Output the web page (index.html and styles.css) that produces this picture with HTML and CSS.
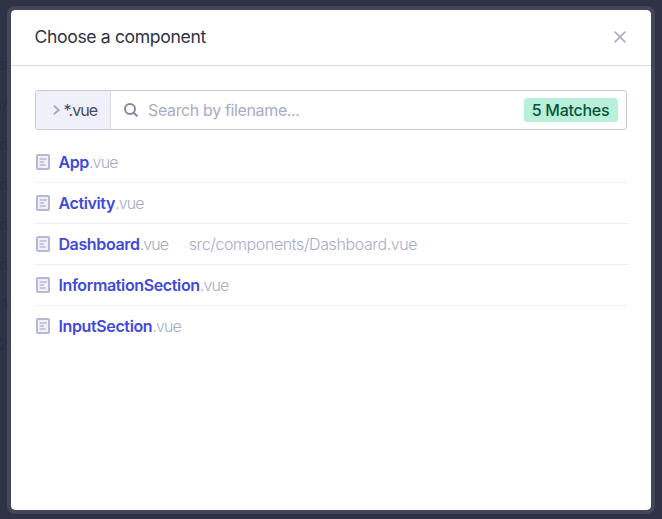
FILE: index.html
```html
<!DOCTYPE html>
<html lang="en">
<head>
<meta charset="utf-8">
<title>Choose a component</title>
<link rel="stylesheet" href="styles.css">
</head>
<body>
<svg class="sprite" aria-hidden="true">
  <symbol id="file" viewBox="0 0 14 16">
    <rect x="1" y="1" width="12" height="14" rx=".8" fill="#f0f0fa" stroke="#b8b8d4" stroke-width="2"/>
    <path d="M3.7 5h7M3.7 8h4.3M3.7 11h6" fill="none" stroke="#b8b8d4" stroke-width="1.5"/>
  </symbol>
</svg>
<div class="backdrop" aria-hidden="true"><span>ts</span><span>s/</span><span>d</span><span>d</span><span>id</span><span>id</span><span>1</span><span>2</span></div>
<main class="modal">
  <header class="header">
    <h1 class="title">Choose a component</h1>
    <svg class="close" viewBox="0 0 12 12"><path d="M.6.6l10.8 10.8M11.4.6L.6 11.4"/></svg>
  </header>
  <section class="content">
    <div class="search">
      <div class="filter">
        <svg class="chevron" viewBox="0 0 7 10"><path d="M.8.7l5 4.3-5 4.3"/></svg>
        <span class="glob">*.vue</span>
      </div>
      <svg class="magnifier" viewBox="0 0 14 14"><circle cx="6" cy="6" r="5"/><path d="M9.6 9.6l3.8 3.8"/></svg>
      <span class="placeholder">Search by filename...</span>
      <span class="badge">5 Matches</span>
    </div>
    <ul class="files">
      <li class="file"><svg class="icon"><use href="#file"/></svg><span class="name">App</span><span class="ext">.vue</span></li>
      <li class="file"><svg class="icon"><use href="#file"/></svg><span class="name">Activity</span><span class="ext">.vue</span></li>
      <li class="file"><svg class="icon"><use href="#file"/></svg><span class="name">Dashboard</span><span class="ext">.vue</span><span class="path">src/components/Dashboard.vue</span></li>
      <li class="file"><svg class="icon"><use href="#file"/></svg><span class="name">InformationSection</span><span class="ext">.vue</span></li>
      <li class="file"><svg class="icon"><use href="#file"/></svg><span class="name">InputSection</span><span class="ext">.vue</span></li>
    </ul>
  </section>
</main>
</body>
</html>
```
FILE: styles.css
```css
* { box-sizing: border-box; }
body {
  margin: 0;
  height: 519px;
  padding: 6px 7px 5px;
  overflow: hidden;
  background: #2f3144;
  font: 16px/24px Inter, "Liberation Sans", sans-serif;
}
.sprite { position: absolute; width: 0; height: 0; }
.backdrop {
  position: absolute;
  top: 44px;
  left: -20px;
  width: 30px;
  display: flex;
  flex-direction: column;
  align-items: flex-end;
  line-height: 40px;
  padding-right: 2px;
  color: #292b42;
}
.modal {
  position: relative;
  width: 648px;
  height: 508px;
  border: 4px solid #44475b;
  border-radius: 8px;
  background: #fff;
  background-clip: padding-box;
}
.header {
  display: flex;
  align-items: center;
  justify-content: space-between;
  height: 56px;
  padding: 0 25px 2px 23.5px;
  border-bottom: 1px solid #dcdce8;
}
.title {
  margin: 0;
  font-size: 17.6px;
  font-weight: 400;
  letter-spacing: -0.36px;
  color: #2f3144;
}
.close { width: 12px; height: 12px; fill: none; stroke: #a9abc5; stroke-width: 1.6; }
.content { padding: 24px 23px 0 24px; }
.search {
  display: flex;
  align-items: center;
  width: 592px;
  height: 40px;
  border: 1px solid #c8c8de;
  border-radius: 3px;
  overflow: hidden;
}
.filter {
  display: flex;
  align-items: center;
  width: 75px;
  height: 100%;
  padding-left: 17px;
  border-right: 1px solid #dcdce8;
  background: #f0f0fa;
}
.chevron { width: 7px; height: 10px; margin-right: 3.5px; fill: none; stroke: #a9abc5; stroke-width: 1.8; }
.glob { color: #484b66; letter-spacing: -0.9px; }
.magnifier { width: 14px; height: 14px; margin: 0 10px 0 13px; fill: none; stroke: #8486a7; stroke-width: 2; }
.placeholder { flex: 1; color: #a9abc5; letter-spacing: -0.36px; }
.badge {
  width: 94px;
  margin-right: 8px;
  padding-right: 1px;
  border-radius: 3px;
  background: #b9f0da;
  color: #09553b;
  font-weight: 500;
  text-align: center;
  letter-spacing: -0.28px;
}
.files { list-style: none; margin: 12px 0 0; padding: 0; }
.file { display: flex; align-items: center; height: 41px; border-bottom: 1px solid #eeeef4; }
.file:last-child { border-color: transparent; }
.icon { width: 14px; height: 16px; margin: 0 8.4px 0 1px; }
.name { color: #4149db; font-weight: 600; letter-spacing: -0.36px; }
.ext { color: #a9abc5; font-weight: 300; letter-spacing: -0.85px; }
.path { margin-left: 20.5px; color: #a9abc5; font-weight: 300; letter-spacing: -0.4px; }
```
